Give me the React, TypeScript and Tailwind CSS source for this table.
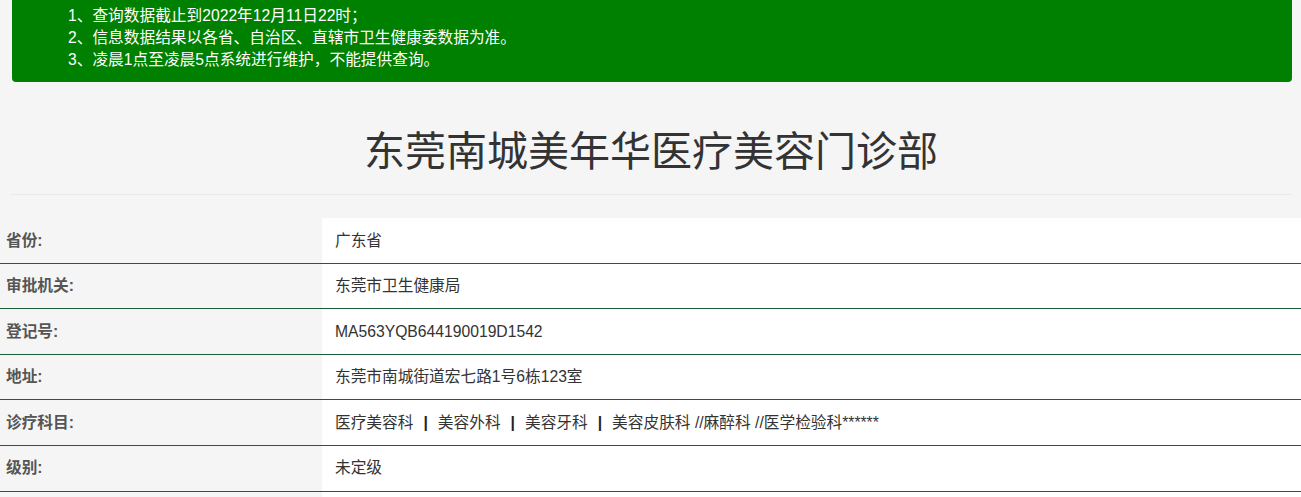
const rows: { label: string; value: React.ReactNode }[] = [
  { label: '省份:', value: '广东省' },
  { label: '审批机关:', value: '东莞市卫生健康局' },
  { label: '登记号:', value: 'MA563YQB644190019D1542' },
  { label: '地址:', value: '东莞市南城街道宏七路1号6栋123室' },
  {
    label: '诊疗科目:',
    value: (
      <>
        医疗美容科<span className="mx-[10px] font-bold text-[#222]">|</span>美容外科
        <span className="mx-[10px] font-bold text-[#222]">|</span>美容牙科
        <span className="mx-[10px] font-bold text-[#222]">|</span>美容皮肤科 //麻醉科 //医学检验科******
      </>
    ),
  },
  { label: '级别:', value: '未定级' },
]

export default function App() {
  return (
    <div
      className="min-h-[497px] bg-[#f5f5f5] text-[15.7px] text-[#333]"
      style={{ fontFamily: '"Liberation Sans", "Noto Sans CJK SC", sans-serif' }}
    >
      <div className="ml-[12px] mr-[9px] h-[82px] rounded-b-[4px] bg-[#008000] pl-[56px] pt-[5px] leading-[22px] text-white">
        <p>1、查询数据截止到2022年12月11日22时；</p>
        <p>2、信息数据结果以各省、自治区、直辖市卫生健康委数据为准。</p>
        <p>3、凌晨1点至凌晨5点系统进行维护，不能提供查询。</p>
      </div>

      <div className="ml-[10px] mr-[9px] border-b border-[#eaeaea] pb-[16px] pt-[44px] text-center">
        <h1 className="text-[41px] leading-[52px] text-[#333]">东莞南城美年华医疗美容门诊部</h1>
      </div>

      <div className="mt-[23px]">
        {rows.map((r) => (
          <div key={r.label} className="grid grid-cols-[322px_1fr] border-b border-[#1b5e3b]">
            <div className="flex h-[44.6px] items-center bg-[#f5f5f5] pl-[6px] font-bold text-[#555]">{r.label}</div>
            <div className="flex h-[44.6px] items-center bg-white pl-[13px]">{r.value}</div>
          </div>
        ))}
        <div className="grid grid-cols-[322px_1fr]">
          <div className="h-[20px] bg-[#f5f5f5]" />
          <div className="h-[20px] bg-white" />
        </div>
      </div>
    </div>
  )
}
